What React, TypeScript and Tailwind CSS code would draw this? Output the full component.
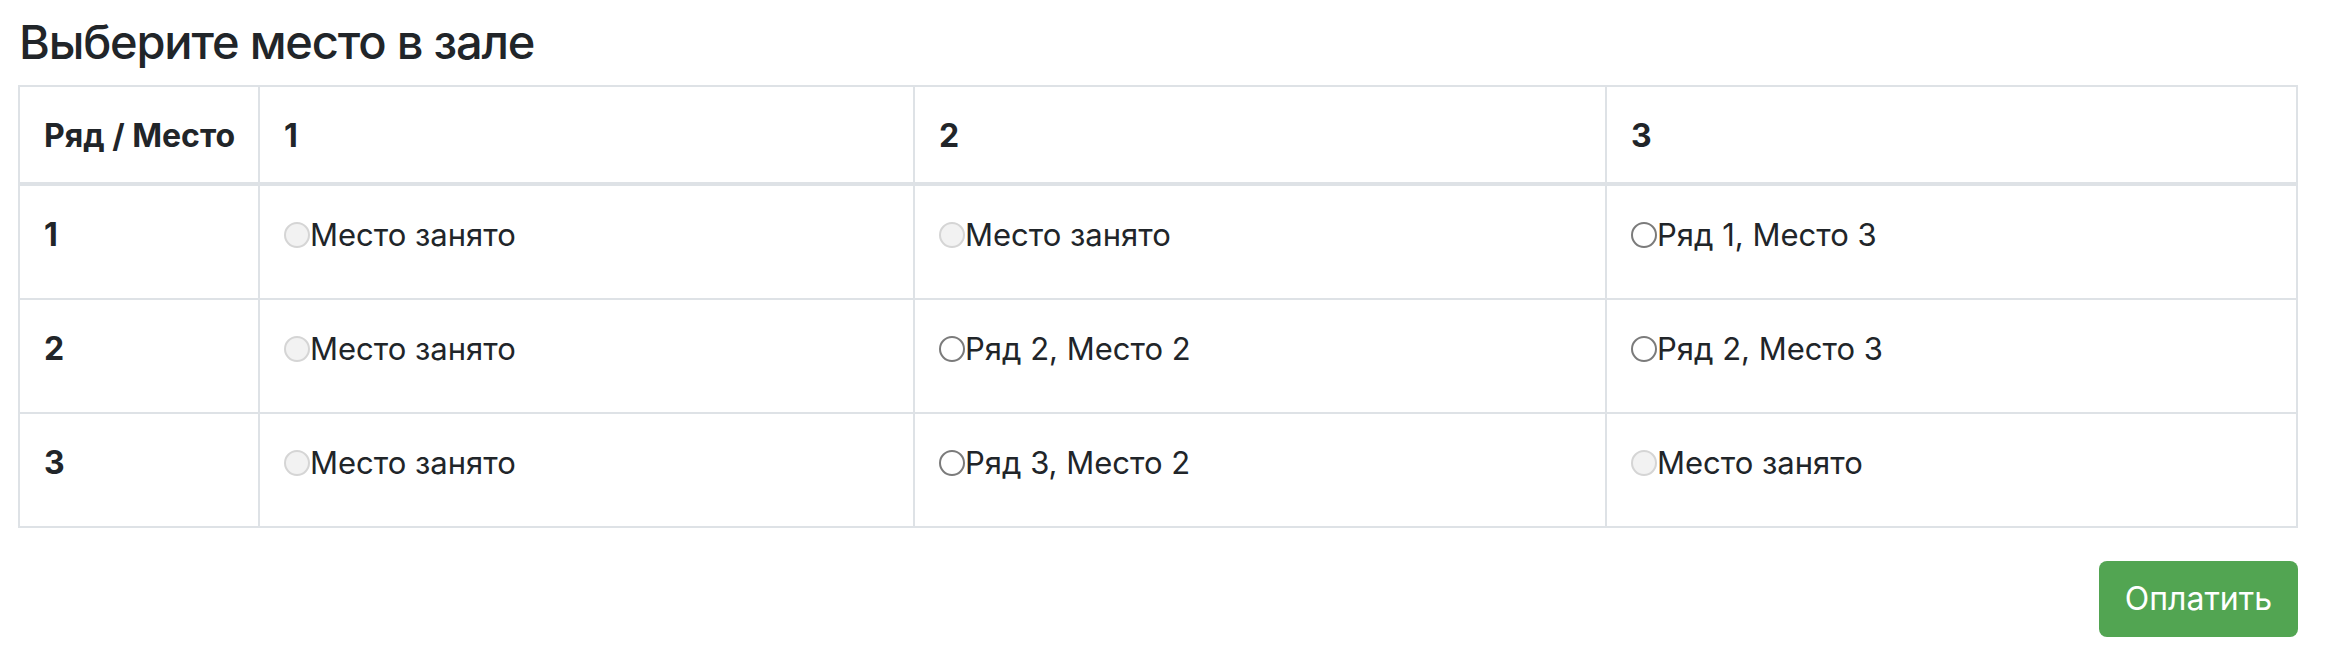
import React from 'react';

type Seat = { taken: boolean; label: string };

const rows: Seat[][] = [
    [
        { taken: true, label: 'Место занято' },
        { taken: true, label: 'Место занято' },
        { taken: false, label: 'Ряд 1, Место 3' },
    ],
    [
        { taken: true, label: 'Место занято' },
        { taken: false, label: 'Ряд 2, Место 2' },
        { taken: false, label: 'Ряд 2, Место 3' },
    ],
    [
        { taken: true, label: 'Место занято' },
        { taken: false, label: 'Ряд 3, Место 2' },
        { taken: true, label: 'Место занято' },
    ],
];

const SeatCell: React.FC<{ seat: Seat; name: string }> = ({ seat, name }) => (
    <td className="border-r-2 border-b-2 border-[#dee2e6] px-6 pt-[25px] pb-10 align-top">
        <label className="flex items-center h-[47px] whitespace-nowrap">
            <input
                type="radio"
                name={name}
                disabled={seat.taken}
                className={
                    seat.taken
                        ? 'appearance-none w-[26px] h-[26px] rounded-full border-2 border-[#d5d5d5] bg-[#f2f2f2]'
                        : 'appearance-none w-[26px] h-[26px] rounded-full border-2 border-[#7b7b7b] bg-white'
                }
            />
            <span>{seat.label}</span>
        </label>
    </td>
);

export default function App() {
    return (
        <div className="w-[2336px] pl-[18px] pt-[13px] text-[#212529] font-['Inter','Liberation_Sans',sans-serif]">
            <h4 className="pl-[1px] text-[47px] tracking-[-1.2px] leading-[58px] font-medium mb-[14px]">Выберите место в зале</h4>
            <table className="w-[2280px] table-fixed border-separate border-spacing-0 border-l-2 border-t-2 border-[#dee2e6] text-[31px] leading-[47px]">
                <colgroup>
                    <col className="w-[240px]" />
                    <col className="w-[655px]" />
                    <col className="w-[692px]" />
                    <col className="w-[691px]" />
                </colgroup>
                <thead>
                    <tr>
                        {['Ряд / Место', '1', '2', '3'].map((h) => (
                            <th key={h} className="border-r-2 border-b-4 border-[#dee2e6] px-6 pt-[25px] pb-[23px] text-left text-[32px] font-bold align-top whitespace-nowrap">
                                {h}
                            </th>
                        ))}
                    </tr>
                </thead>
                <tbody>
                    {rows.map((row, i) => (
                        <tr key={i}>
                            <td className="border-r-2 border-b-2 border-[#dee2e6] px-6 pt-[25px] pb-10 text-[32px] font-bold align-top">{i + 1}</td>
                            {row.map((seat, j) => (
                                <SeatCell key={j} seat={seat} name="seat" />
                            ))}
                        </tr>
                    ))}
                </tbody>
            </table>
            <div className="w-[2280px] flex justify-end mt-[33px]">
                <button className="bg-[#52a552] text-white text-[32px] leading-[48px] px-6 py-3 border-2 border-transparent rounded-[8px]">
                    Оплатить
                </button>
            </div>
        </div>
    );
}
